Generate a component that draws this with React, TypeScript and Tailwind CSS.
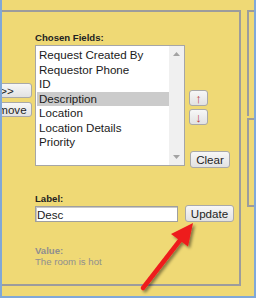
const fields = [
  "Request Created By",
  "Requestor Phone",
  "ID",
  "Description",
  "Location",
  "Location Details",
  "Priority",
];

const btn =
  "shrink-0 border border-[#a9a9a9] rounded-[3px] bg-linear-to-b from-[#f7f7f7] to-[#e2e2e2] text-[#1e1e1e] text-[11.6px] leading-none flex items-center justify-center";

function ListBox() {
  return (
    <div className="w-[150px] h-[121px] bg-white border border-[#a6a6a6] flex">
      <div className="flex-1 pt-[2px] pl-[1px]">
        {fields.map((f) => (
          <div
            key={f}
            className={
              "h-[14.5px] leading-[14.5px] pl-[2px] text-[11.6px] text-[#1a1a1a] whitespace-nowrap " +
              (f === "Description" ? "bg-[#cbcbcb]" : "")
            }
          >
            {f}
          </div>
        ))}
      </div>
      {/* scrollbar */}
      <div className="w-[15px] bg-[#f0f0f0] flex flex-col justify-between items-center py-[6px]">
        <svg width="7" height="4" viewBox="0 0 7 4">
          <path d="M0 4 L3.5 0 L7 4 Z" fill="#a3a3a3" />
        </svg>
        <svg width="7" height="4" viewBox="0 0 7 4">
          <path d="M0 0 L3.5 4 L7 0 Z" fill="#a3a3a3" />
        </svg>
      </div>
    </div>
  );
}

function RedArrow() {
  return (
    <svg
      className="absolute left-0 top-0 pointer-events-none"
      width="256"
      height="298"
      viewBox="0 0 256 298"
    >
      <defs>
        <filter id="sh" x="-20%" y="-20%" width="140%" height="140%">
          <feDropShadow dx="2" dy="2" stdDeviation="1.4" floodColor="#000" floodOpacity="0.45" />
        </filter>
      </defs>
      <g filter="url(#sh)">
        <line x1="143" y1="288" x2="181" y2="239" stroke="#ee1c1c" strokeWidth="4.5" strokeLinecap="round" />
        <path d="M193 223 L188 246.5 L171 234 Z" fill="#ee1c1c" />
      </g>
    </svg>
  );
}

export default function App() {
  return (
    <div className="relative w-[256px] h-[298px] font-['Liberation_Sans',Arial,sans-serif]">
      <div className="w-[256px] h-[298px] bg-[#efd975] border-x-2 border-b-2 border-[#80a8d8] flex gap-[6px] pt-[10px] overflow-hidden">
        {/* main panel */}
        <div className="w-[239px] h-[276px] shrink-0 border-t-2 border-r-2 border-b-2 border-[#9c9c9c] overflow-hidden pt-[20px]">
          <div className="flex items-start">
            <div className="-ml-[24px] w-[54px] shrink-0 flex flex-col gap-[4px] mt-[51px]">
              <button className={btn + " w-[54px] h-[15px] pl-[4px]"}>&gt;&gt;</button>
              <button className={btn + " w-[54px] h-[15px]"}>Remove</button>
            </div>

            <div className="ml-[3px] shrink-0">
              <div className="h-[13px] leading-[12px] text-[9.6px] font-bold text-[#222]">Chosen Fields:</div>
              <ListBox />
            </div>

            <div className="ml-[4px] flex flex-col items-start pt-[58px]">
              <button className={btn + " w-[19px] h-[16px] !text-[13px] text-[#b84545]"}>↑</button>
              <button className={btn + " w-[19px] h-[16px] mt-[3px] !text-[13px] text-[#b84545]"}>↓</button>
              <button className={btn + " w-[40px] h-[17px] mt-[26px] ml-[1px]"}>Clear</button>
            </div>
          </div>

          <div className="ml-[33px] mt-[25px]">
            <div className="h-[12px] leading-[12px] text-[9.6px] font-bold text-[#222]">Label:</div>
            <div className="flex items-start">
              <input
                readOnly
                value="Desc"
                className="mt-[1px] w-[143px] h-[16px] border border-[#9f9f9f] shadow-[inset_1px_1px_0_#c8c8c8] bg-white px-[1px] text-[11.6px] leading-none text-[#1a1a1a] outline-none"
              />
              <button className={btn + " w-[49px] h-[17px] ml-[7px]"}>Update</button>
            </div>
            <div className="mt-[23px] text-[9.6px] leading-[11px] text-[#8f8f8f]">
              <div className="font-bold">Value:</div>
              <div>The room is hot</div>
            </div>
          </div>
        </div>

        {/* right strip */}
        <div className="flex-1 flex flex-col">
          <div className="h-[106px] border-t-2 border-l-2 border-[#9c9c9c]" />
          <div className="h-[89px] mt-[2px] border-t-2 border-l-2 border-b-2 border-[#9c9c9c]" />
        </div>
      </div>
      <RedArrow />
    </div>
  );
}
